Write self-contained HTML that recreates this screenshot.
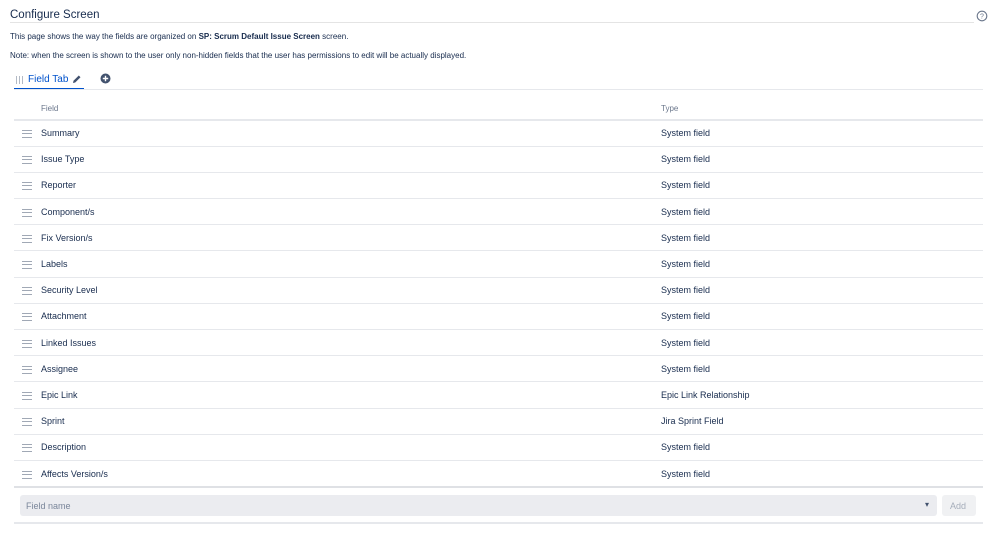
<!DOCTYPE html>
<html><head><meta charset="utf-8"><style>
body{margin:0;width:999px;height:539px;background:#fff;font-family:"Liberation Sans",sans-serif;color:#172b4d;position:relative;overflow:hidden}
.a{position:absolute;white-space:nowrap}
.t{font-size:9px}
.line{position:absolute;left:14px;width:969px;height:1px;background:#e6e8ec}
.h{position:absolute;left:22px;width:10px;height:6px;border-top:1px solid #a0a8b5;border-bottom:1px solid #a0a8b5}
.h:after{content:"";position:absolute;left:0;right:0;top:2px;height:1px;background:#a0a8b5}
.bar{position:absolute;top:76px;width:1px;height:8px;background:#b3bac5}
</style></head><body>
<div class="a" style="left:10px;top:9px;font-size:11.5px;color:#172b4d">Configure Screen</div>
<div style="position:absolute;left:10px;top:22px;width:964px;height:1px;background:#e4e4e4"></div>
<svg class="a" style="left:976px;top:10px" width="12" height="12" viewBox="0 0 12 12"><circle cx="6" cy="6" r="4.8" fill="none" stroke="#6b778c" stroke-width="1.1"/><text x="6" y="8.6" font-size="7" text-anchor="middle" fill="#6b778c" font-family="Liberation Sans">?</text></svg>
<div class="a t" style="left:10px;top:32px;font-size:8px">This page shows the way the fields are organized on <b>SP: Scrum Default Issue Screen</b> screen.</div>
<div class="a t" style="left:10px;top:51px;font-size:8px">Note: when the screen is shown to the user only non-hidden fields that the user has permissions to edit will be actually displayed.</div>
<div class="bar" style="left:16px"></div><div class="bar" style="left:19px"></div><div class="bar" style="left:22px"></div>
<div class="a" style="left:28px;top:74px;font-size:10px;color:#0052cc">Field Tab</div>
<svg class="a" style="left:72px;top:74px" width="10" height="10" viewBox="0 0 10 10"><path d="M1 9 L1.5 6.8 L6.8 1.5 L8.5 3.2 L3.2 8.5 Z" fill="#42526e"/></svg>
<div style="position:absolute;left:14px;top:88px;width:70px;height:2px;background:#0052cc"></div>
<svg class="a" style="left:100px;top:73px" width="11" height="11" viewBox="0 0 11 11"><circle cx="5.5" cy="5.5" r="5" fill="#42526e"/><path d="M5.5 2.8v5.4M2.8 5.5h5.4" stroke="#fff" stroke-width="1.4"/></svg>
<div style="position:absolute;left:14px;top:89px;width:969px;height:1px;background:#e6e8ec"></div>
<div class="a" style="left:41px;top:104px;font-size:8px;color:#6b778c">Field</div>
<div class="a" style="left:661px;top:104px;font-size:8px;color:#6b778c">Type</div>
<div class="line" style="top:119px;height:2px"></div>
<div id="rows"></div>
<script>
var r=[["Summary","System field"],["Issue Type","System field"],["Reporter","System field"],["Component/s","System field"],["Fix Version/s","System field"],["Labels","System field"],["Security Level","System field"],["Attachment","System field"],["Linked Issues","System field"],["Assignee","System field"],["Epic Link","Epic Link Relationship"],["Sprint","Jira Sprint Field"],["Description","System field"],["Affects Version/s","System field"]];
var h="";for(var i=0;i<r.length;i++){var y=121+i*26.2;
h+='<div class="h" style="top:'+(y+9)+'px"></div><div class="a t" style="left:41px;top:'+(y+7)+'px">'+r[i][0]+'</div><div class="a t" style="left:661px;top:'+(y+7)+'px">'+r[i][1]+'</div>';
if(i<r.length-1)h+='<div class="line" style="top:'+(y+24.5)+'px"></div>';}
document.getElementById("rows").innerHTML=h;
</script>
<div class="line" style="top:486px;height:2px;background:#dfe1e5"></div>
<div style="position:absolute;left:20px;top:495px;width:917px;height:21px;background:#ebecf0;border-radius:3px"></div>
<div class="a" style="left:26px;top:501px;font-size:9px;color:#7a869a">Field name</div>
<div class="a" style="left:925px;top:500px;font-size:8px;color:#42526e">▾</div>
<div style="position:absolute;left:942px;top:495px;width:34px;height:21px;background:#f0f1f3;border-radius:3px"></div>
<div class="a" style="left:950px;top:501px;font-size:9px;color:#a5adba">Add</div>
<div class="line" style="top:522px;height:2px;background:#e6e8ec"></div>
</body></html>
